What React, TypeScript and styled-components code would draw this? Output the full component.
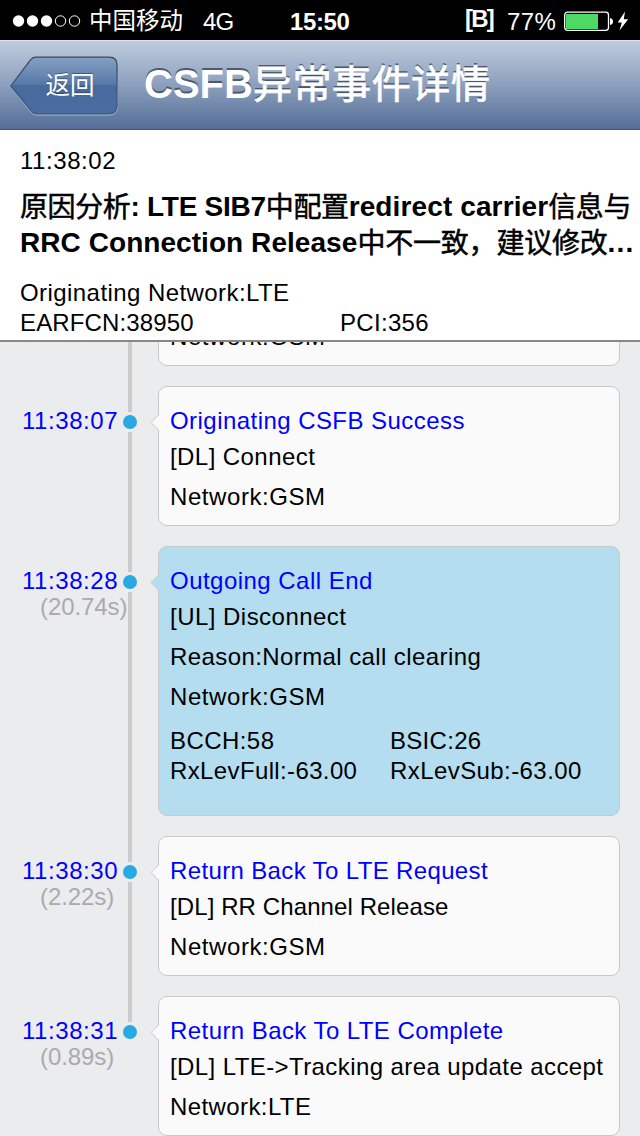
import React from "react";
import styled, { createGlobalStyle, css } from "styled-components";

const sans = `"Liberation Sans", "Noto Sans CJK SC", Arial, sans-serif`;

const GlobalStyle = createGlobalStyle`
  *, *::before, *::after { box-sizing: border-box; }
  body { margin: 0; background: #ebecee; font-family: ${sans}; color: #000; }
`;

const Screen = styled.main`
  display: flex;
  flex-direction: column;
  width: 640px;
  height: 1136px;
  overflow: hidden;
  background: #ebecee;
  font-size: 24px;
  white-space: nowrap;
`;

const Run = styled.span<{ $track?: number }>`
  letter-spacing: ${(p) => p.$track ?? 0}px;
`;

/* Status bar */
const StatusBar = styled.header`
  display: grid;
  grid-template-columns: 290px 175px 1fr;
  align-items: center;
  height: 40px;
  background: #000;
  color: #fff;
  line-height: 40px;
`;

const StatusGroup = styled.div`
  display: flex;
  align-items: center;
  height: 40px;
`;

const Signal = styled.svg`
  margin-left: 12px;
  margin-right: 8px;
`;

const Carrier = styled.span`
  width: 114px;
  height: 40px;
  font-size: 23.5px;
  line-height: 37px;
  font-family: "Noto Sans CJK SC", sans-serif;
  font-weight: 400;
`;

const Clock = styled.span`
  font-weight: 700;
  letter-spacing: -0.4px;
  padding-top: 2px;
`;

const Badge = styled.span`
  display: flex;
  width: 42px;
  height: 40px;
  line-height: 36px;
  font-weight: 700;
  letter-spacing: -1.8px;
`;

const Percent = styled.span`
  width: 57px;
  padding-top: 2px;
`;

/* Navigation bar */
const NavBar = styled.nav`
  display: flex;
  align-items: flex-start;
  height: 90px;
  padding-left: 10px;
  border-top: 1px solid #dbe3ec;
  border-bottom: 1px solid #3d5781;
  background: linear-gradient(#bfccdd, #8c9fbd 50%, #546e97);
`;

const BackButton = styled.button`
  display: grid;
  width: 108px;
  height: 60px;
  margin: 15px 0 0;
  padding: 0;
  border: 0;
  background: none;
  color: #fff;
  font: 400 24.5px/55px "Noto Sans CJK SC", sans-serif;
  & > * { grid-area: 1 / 1; }
`;

const BackLabel = styled.span`
  z-index: 1;
  padding-left: 12px;
  text-shadow: 0 -1px 0 rgba(0, 0, 0, 0.35);
`;

const NavTitle = styled.h1`
  margin: 0 0 0 26px;
  color: #fff;
  font-size: 40px;
  line-height: 80px;
  font-weight: 700;
  text-shadow: 0 -2px 0 #4b5a70;
`;

const Han = styled.span<{ $stroke?: number; $track?: number }>`
  font-family: "Noto Sans CJK SC", sans-serif;
  font-weight: 400;
  letter-spacing: ${(p) => p.$track ?? -0.4}px;
  -webkit-text-stroke: ${(p) => p.$stroke ?? 0.5}px currentColor;
`;

const TitleHan = styled(Han)`
  font-size: 39px;
  letter-spacing: 0.6px;
`;

/* Summary */
const Summary = styled.section`
  height: 212px;
  padding: 15px 0 0 20px;
  background: #fff;
  border-bottom: 2px solid #888;
`;

const SummaryTime = styled.div`
  line-height: 32px;
`;

const Cause = styled.h2`
  margin: 12px 0 17px;
  font-size: 28px;
  line-height: 36px;
  font-weight: 700;
`;

const CauseLine = styled.div`
  display: flex;
  height: 36px;
  ${Han} { line-height: 33px; }
`;

const Columns = styled.div<{ $first: number }>`
  display: grid;
  grid-template-columns: ${(p) => p.$first}px 1fr;
  line-height: 30px;
`;

/* Timeline */
const Timeline = styled.section`
  display: flex;
  flex: 1;
  min-height: 0;
  flex-direction: column;
  justify-content: flex-end;
  overflow: hidden;
`;

const EventRow = styled.article<{ $tall?: boolean; $last?: boolean }>`
  display: grid;
  flex: none;
  grid-template-columns: 120px 20px 18px 462px;
  height: ${(p) => (p.$tall ? 270 : 140) + (p.$last ? 0 : 20)}px;
`;

const Stamp = styled.div`
  z-index: 1;
  padding-top: 21px;
  padding-left: 22px;
  color: #0000ff;
  line-height: 28px;
`;

const Elapsed = styled.div`
  padding-left: 18px;
  color: #aaaaaf;
  line-height: 24px;
`;

const Rail = styled.div`
  display: flex;
  flex-direction: column;
  align-items: center;
`;

const Segment = styled.i<{ $lead?: boolean }>`
  width: 4px;
  background: #ccc;
  ${(p) => (p.$lead ? css`height: 26px;` : css`flex: 1;`)}
`;

const Dot = styled.i`
  width: 14px;
  height: 14px;
  margin: 3px 0;
  border-radius: 50%;
  background: #29a9e1;
`;

const Card = styled.div<{ $active?: boolean; $tall?: boolean }>`
  position: relative;
  grid-column: 4;
  height: ${(p) => (p.$tall ? 270 : 140)}px;
  padding: 18px 0 0 11px;
  border: 1px solid #c8c9ca;
  border-radius: 9px;
  background: ${(p) => (p.$active ? "#b4ddef" : "#fafafa")};
`;

const Pointer = styled.svg`
  position: absolute;
  left: -9px;
  top: 27px;
`;

const EventTitle = styled.h3`
  margin: 0;
  color: #0000ff;
  font-size: 24px;
  font-weight: 400;
  line-height: 32px;
`;

const Detail = styled.div`
  line-height: 40px;
`;

const Metrics = styled(Columns)`
  margin-top: 9px;
`;

type Label = [text: string, track: number];

interface TimelineEvent {
  time?: Label;
  elapsed?: Label;
  title: Label;
  details: Label[];
  metrics?: Label[];
  active?: boolean;
}

const events: TimelineEvent[] = [
  { title: ["", 0], details: [["", 0], ["Network:GSM", 0.57]] },
  {
    time: ["11:38:07", 0.55],
    title: ["Originating CSFB Success", 0.45],
    details: [["[DL] Connect", 0.43], ["Network:GSM", 0.57]],
  },
  {
    time: ["11:38:28", 0.55],
    elapsed: ["(20.74s)", -0.08],
    title: ["Outgoing Call End", 0.47],
    details: [["[UL] Disconnect", 0.47], ["Reason:Normal call clearing", 0.41], ["Network:GSM", 0.57]],
    metrics: [["BCCH:58", 0.44], ["BSIC:26", 0.3], ["RxLevFull:-63.00", 0.37], ["RxLevSub:-63.00", 0.42]],
    active: true,
  },
  {
    time: ["11:38:30", 0.55],
    elapsed: ["(2.22s)", -0.08],
    title: ["Return Back To LTE Request", 0.36],
    details: [["[DL] RR Channel Release", 0.1], ["Network:GSM", 0.57]],
  },
  {
    time: ["11:38:31", 0.55],
    elapsed: ["(0.89s)", -0.08],
    title: ["Return Back To LTE Complete", 0.43],
    details: [["[DL] LTE->Tracking area update accept", 0.41], ["Network:LTE", 0.4]],
  },
];

const Tracked = ({ label }: { label: Label }) => <Run $track={label[1]}>{label[0]}</Run>;

function EventItem({ event, last }: { event: TimelineEvent; last: boolean }) {
  const tall = !!event.metrics;
  return (
    <EventRow $tall={tall} $last={last}>
      <Stamp>
        {event.time && <Tracked label={event.time} />}
        {event.elapsed && <Elapsed><Tracked label={event.elapsed} /></Elapsed>}
      </Stamp>
      <Rail>
        <Segment $lead />
        <Dot />
        {!last && <Segment />}
      </Rail>
      <Card $active={event.active} $tall={tall}>
        <Pointer width="10" height="17" viewBox="0 0 10 17">
          <path d="M10 0.8 L9 0.8 L1.2 8.5 L9 16.2 L10 16.2Z" fill={event.active ? "#b4ddef" : "#fafafa"} />
          <path d="M8.6 0.8 L1 8.5 L8.6 16.2" fill="none" stroke="#c8c9ca" />
        </Pointer>
        <EventTitle><Tracked label={event.title} />&nbsp;</EventTitle>
        {event.details.map((d, i) => (
          <Detail key={i}><Tracked label={d} />&nbsp;</Detail>
        ))}
        {event.metrics && (
          <Metrics $first={220}>
            {event.metrics.map((m) => <Tracked key={m[0]} label={m} />)}
          </Metrics>
        )}
      </Card>
    </EventRow>
  );
}

export default function App() {
  return (
    <Screen>
      <GlobalStyle />
      <StatusBar>
        <StatusGroup>
          <Signal width="69" height="14" viewBox="0 0 69 14">
            {[6.5, 20.5, 34.5].map((x) => <circle key={x} cx={x} cy="7" r="5.7" fill="#fff" />)}
            {[48.5, 62.5].map((x) => <circle key={x} cx={x} cy="7" r="5.2" fill="none" stroke="#fff" />)}
          </Signal>
          <Carrier>中国移动</Carrier>
          <Percent><Run $track={-0.8}>4G</Run></Percent>
        </StatusGroup>
        <Clock>15:50</Clock>
        <StatusGroup>
          <Badge>[B]</Badge>
          <Percent><Run $track={0.4}>77%</Run></Percent>
          <svg width="66" height="24" viewBox="0 0 66 24">
            <rect x="0.7" y="3.2" width="43.8" height="18.2" rx="2.8" fill="none" stroke="#fff" strokeWidth="1.3" />
            <rect x="2" y="5" width="32" height="15" fill="#4cd964" />
            <path d="M46 9 Q49 9.5 49 12.5 Q49 15.5 46 16Z" fill="#fff" />
            <path d="M61 2.5 L53.7 13.5 H57.8 L55.5 21.5 L64.2 10.3 H59.8Z" fill="#fff" />
          </svg>
        </StatusGroup>
      </StatusBar>
      <NavBar>
        <BackButton>
          <svg width="108" height="60" viewBox="0 0 108 60">
            <defs>
              <linearGradient id="back" x1="0" y1="0" x2="0" y2="1">
                <stop offset="0" stopColor="#87a0c3" />
                <stop offset="0.5" stopColor="#5576a7" />
                <stop offset="0.5" stopColor="#476a9f" />
                <stop offset="1" stopColor="#4a6c9f" />
              </linearGradient>
              <linearGradient id="rim" x1="0" y1="0" x2="0" y2="1">
                <stop offset="0" stopColor="#38475c" />
                <stop offset="0.4" stopColor="#3f5575" />
                <stop offset="1" stopColor="#3d5a8a" />
              </linearGradient>
            </defs>
            <path d="M1 31 L20 55 Q22.5 59 26 59 H99 Q107.5 59 107.5 50.5 V10" fill="none" stroke="#a3b3cb" />
            <path d="M26 1.2 H99 Q107 1.2 107 9 V49.5 Q107 57.7 99 57.7 H26 Q23.5 57.7 21 54.5 L0.8 30 L19.5 5.2 Q22.5 1.2 26 1.2Z" fill="url(#back)" stroke="url(#rim)" strokeWidth="1.3" />
          </svg>
          <BackLabel>返回</BackLabel>
        </BackButton>
        <NavTitle>CSFB<TitleHan $stroke={0.8}>异常事件详情</TitleHan></NavTitle>
      </NavBar>
      <Summary>
        <SummaryTime><Run $track={0.55}>11:38:02</Run></SummaryTime>
        <Cause>
          <CauseLine>
            <Han>原因分析</Han><Run $track={-0.25}>:&nbsp;LTE SIB7</Run><Han>中配置</Han><Run $track={0.12}>redirect carrier</Run><Han>信息与</Han>
          </CauseLine>
          <CauseLine>
            <Run $track={0.06}>RRC Connection Release</Run><Han $track={-0.2}>中不一致，建议修改</Han><Run $track={1.2}>...</Run>
          </CauseLine>
        </Cause>
        <Columns $first={320}>
          <Run $track={0.43}>Originating Network:LTE</Run>
          <span />
          <Run $track={0.13}>EARFCN:38950</Run>
          <Run $track={0.3}>PCI:356</Run>
        </Columns>
      </Summary>
      <Timeline>
        {events.map((event, i) => (
          <EventItem key={i} event={event} last={i === events.length - 1} />
        ))}
      </Timeline>
    </Screen>
  );
}
